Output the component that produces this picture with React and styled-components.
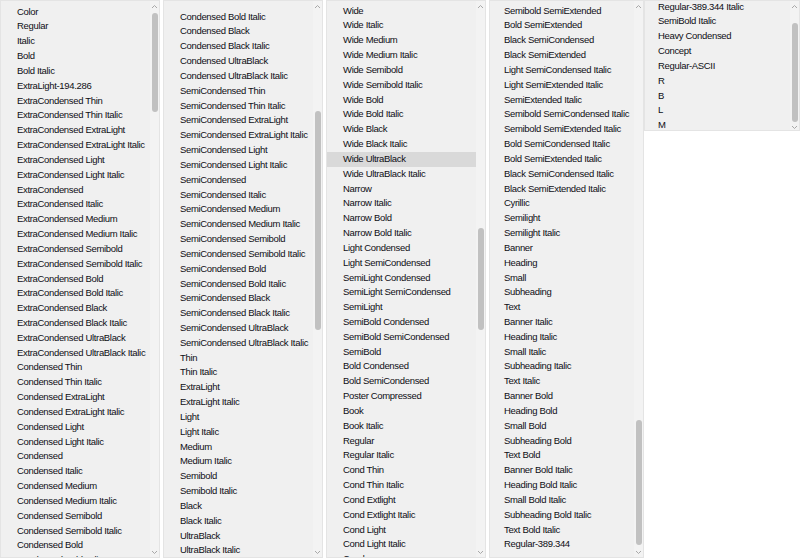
import React from 'react';
import styled, { createGlobalStyle } from 'styled-components';

const ROW = 14.83;

const GlobalStyle = createGlobalStyle`
  html, body { margin: 0; padding: 0; background: #ffffff; }
  body { width: 800px; height: 560px; overflow: hidden; }
`;

const Page = styled.div`
  display: flex;
  align-items: flex-start;
  width: 800px;
  height: 560px;
  overflow: hidden;
`;

const Panel = styled.div`
  display: flex;
  flex: 0 0 ${(p) => p.$w}px;
  height: ${(p) => p.$h}px;
  margin-right: ${(p) => p.$gap}px;
  box-sizing: border-box;
  background: #f0f0f0;
  border: 1px solid #e4e4e4;
  overflow: hidden;
`;

const List = styled.ul`
  flex: 1;
  min-width: 0;
  margin: ${(p) => p.$offset}px 0 0 0;
  padding: 0;
  list-style: none;
  align-self: flex-start;
`;

const Item = styled.li`
  height: ${ROW}px;
  line-height: ${ROW}px;
  padding-left: ${(p) => p.$indent}px;
  white-space: nowrap;
  overflow: hidden;
  font-family: "Liberation Sans", Arial, sans-serif;
  font-size: 9.5px;
  letter-spacing: -0.33px;
  color: #0e0e14;
  background: ${(p) => (p.$active ? '#d9d9d9' : 'transparent')};
`;

const Scroll = styled.div`
  flex: 0 0 9px;
  display: flex;
  flex-direction: column;
  align-items: center;
  background: #f3f3f3;
`;

const Arrow = styled.div`
  flex: 0 0 10px;
  display: flex;
  align-items: center;
  justify-content: center;
`;

const Track = styled.div`
  flex: 1;
  display: flex;
  flex-direction: column;
  align-items: center;
`;

const Thumb = styled.div`
  width: 6px;
  border-radius: 3px;
  background: #c1c1c1;
  flex: none;
`;

const Chevron = ({ up }) => (
  <svg width="7" height="5" viewBox="0 0 7 5">
    <polyline
      points={up ? '1,4 3.5,1.5 6,4' : '1,1 3.5,3.5 6,1'}
      fill="none"
      stroke="#a8a8a8"
      strokeWidth="1"
    />
  </svg>
);

const columns = [
  {
    w: 160, h: 558, gap: 3, offset: 3.6, indent: 16,
    thumb: [13, 112],
    items: [
      'Color', 'Regular', 'Italic', 'Bold', 'Bold Italic', 'ExtraLight-194.286',
      'ExtraCondensed Thin', 'ExtraCondensed Thin Italic', 'ExtraCondensed ExtraLight',
      'ExtraCondensed ExtraLight Italic', 'ExtraCondensed Light', 'ExtraCondensed Light Italic',
      'ExtraCondensed', 'ExtraCondensed Italic', 'ExtraCondensed Medium',
      'ExtraCondensed Medium Italic', 'ExtraCondensed Semibold', 'ExtraCondensed Semibold Italic',
      'ExtraCondensed Bold', 'ExtraCondensed Bold Italic', 'ExtraCondensed Black',
      'ExtraCondensed Black Italic', 'ExtraCondensed UltraBlack', 'ExtraCondensed UltraBlack Italic',
      'Condensed Thin', 'Condensed Thin Italic', 'Condensed ExtraLight', 'Condensed ExtraLight Italic',
      'Condensed Light', 'Condensed Light Italic', 'Condensed', 'Condensed Italic',
      'Condensed Medium', 'Condensed Medium Italic', 'Condensed Semibold',
      'Condensed Semibold Italic', 'Condensed Bold', 'Condensed Bold Italic',
    ],
  },
  {
    w: 160, h: 558, gap: 3, offset: 8.6, indent: 16,
    thumb: [111, 330],
    items: [
      'Condensed Bold Italic', 'Condensed Black', 'Condensed Black Italic', 'Condensed UltraBlack',
      'Condensed UltraBlack Italic', 'SemiCondensed Thin', 'SemiCondensed Thin Italic',
      'SemiCondensed ExtraLight', 'SemiCondensed ExtraLight Italic', 'SemiCondensed Light',
      'SemiCondensed Light Italic', 'SemiCondensed', 'SemiCondensed Italic', 'SemiCondensed Medium',
      'SemiCondensed Medium Italic', 'SemiCondensed Semibold', 'SemiCondensed Semibold Italic',
      'SemiCondensed Bold', 'SemiCondensed Bold Italic', 'SemiCondensed Black',
      'SemiCondensed Black Italic', 'SemiCondensed UltraBlack', 'SemiCondensed UltraBlack Italic',
      'Thin', 'Thin Italic', 'ExtraLight', 'ExtraLight Italic', 'Light', 'Light Italic', 'Medium',
      'Medium Italic', 'Semibold', 'Semibold Italic', 'Black', 'Black Italic', 'UltraBlack',
      'UltraBlack Italic',
    ],
  },
  {
    w: 160, h: 558, gap: 3, offset: 2.6, indent: 16, active: 10,
    thumb: [228, 330],
    items: [
      'Wide', 'Wide Italic', 'Wide Medium', 'Wide Medium Italic', 'Wide Semibold',
      'Wide Semibold Italic', 'Wide Bold', 'Wide Bold Italic', 'Wide Black', 'Wide Black Italic',
      'Wide UltraBlack', 'Wide UltraBlack Italic', 'Narrow', 'Narrow Italic', 'Narrow Bold',
      'Narrow Bold Italic', 'Light Condensed', 'Light SemiCondensed', 'SemiLight Condensed',
      'SemiLight SemiCondensed', 'SemiLight', 'SemiBold Condensed', 'SemiBold SemiCondensed',
      'SemiBold', 'Bold Condensed', 'Bold SemiCondensed', 'Poster Compressed', 'Book',
      'Book Italic', 'Regular', 'Regular Italic', 'Cond Thin', 'Cond Thin Italic', 'Cond Extlight',
      'Cond Extlight Italic', 'Cond Light', 'Cond Light Italic', 'Cond',
    ],
  },
  {
    w: 155, h: 558, gap: 0, offset: 2.6, indent: 14,
    thumb: [420, 545],
    items: [
      'Semibold SemiExtended', 'Bold SemiExtended', 'Black SemiCondensed', 'Black SemiExtended',
      'Light SemiCondensed Italic', 'Light SemiExtended Italic', 'SemiExtended Italic',
      'Semibold SemiCondensed Italic', 'Semibold SemiExtended Italic', 'Bold SemiCondensed Italic',
      'Bold SemiExtended Italic', 'Black SemiCondensed Italic', 'Black SemiExtended Italic',
      'Cyrillic', 'Semilight', 'Semilight Italic', 'Banner', 'Heading', 'Small', 'Subheading',
      'Text', 'Banner Italic', 'Heading Italic', 'Small Italic', 'Subheading Italic', 'Text Italic',
      'Banner Bold', 'Heading Bold', 'Small Bold', 'Subheading Bold', 'Text Bold',
      'Banner Bold Italic', 'Heading Bold Italic', 'Small Bold Italic', 'Subheading Bold Italic',
      'Text Bold Italic', 'Regular-389.344',
    ],
  },
  {
    w: 156, h: 131, gap: 0, offset: -1.4, indent: 13,
    thumb: [23, 122],
    items: [
      'Regular-389.344 Italic', 'SemiBold Italic', 'Heavy Condensed', 'Concept', 'Regular-ASCII',
      'R', 'B', 'L', 'M',
    ],
  },
];

export default function App() {
  return (
    <>
      <GlobalStyle />
      <Page>
        {columns.map((c, i) => (
          <Panel key={i} $w={c.w} $h={c.h} $gap={c.gap}>
            <List $offset={c.offset}>
              {c.items.map((t, j) => (
                <Item key={j} $indent={c.indent} $active={c.active === j}>
                  {t}
                </Item>
              ))}
            </List>
            <Scroll>
              <Arrow><Chevron up /></Arrow>
              <Track>
                <Thumb style={{ marginTop: c.thumb[0] - 11, height: c.thumb[1] - c.thumb[0] }} />
              </Track>
              <Arrow><Chevron /></Arrow>
            </Scroll>
          </Panel>
        ))}
      </Page>
    </>
  );
}
